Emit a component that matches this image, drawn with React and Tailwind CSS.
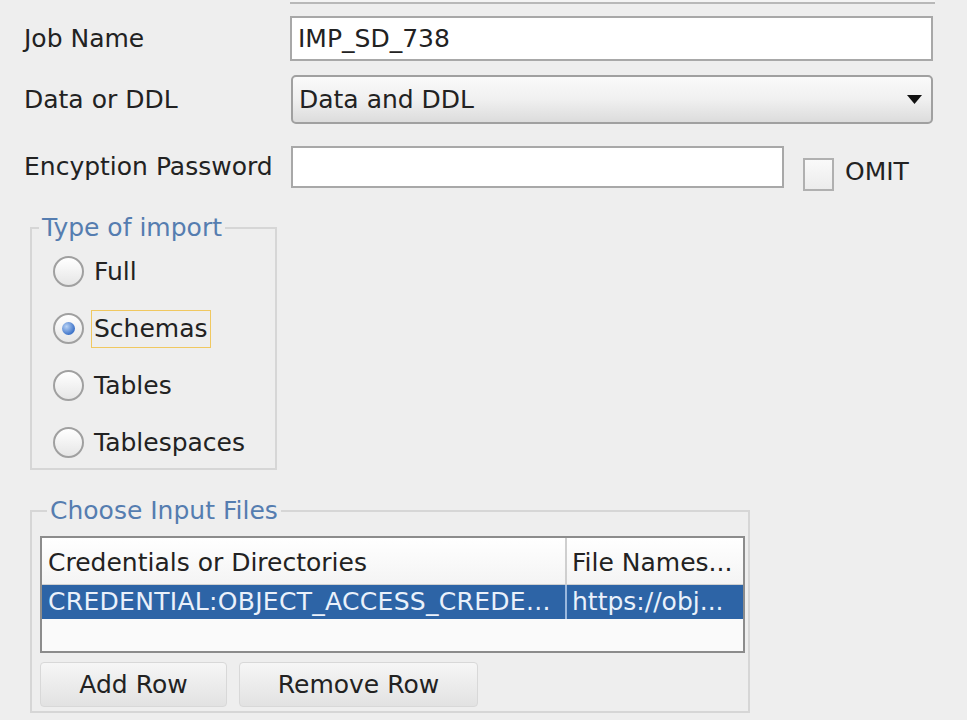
import React from "react";

const font = { fontFamily: '"DejaVu Sans", Verdana, sans-serif' };

function Radio({ label, checked, focused }) {
  return (
    <div className="flex items-center h-[57px]">
      <div className="ml-[21px] w-[31px] h-[31px] rounded-full border-2 border-[#a0a0a0] bg-gradient-to-b from-[#ffffff] to-[#e6e6e6] flex items-center justify-center">
        {checked && (
          <div className="w-[13px] h-[13px] rounded-full bg-[radial-gradient(circle_at_35%_35%,#b9d3f5,#3d73c9_70%)]" />
        )}
      </div>
      <span
        className={
          "ml-[7px] px-[2px] leading-[36px] " +
          (focused ? "border border-[#f0c860]" : "border border-transparent")
        }
      >
        {label}
      </span>
    </div>
  );
}

export default function App() {
  return (
    <div className="w-[967px] h-[720px] bg-[#eeeeee] text-[#222222] text-[25px] overflow-hidden" style={font}>
      {/* cut-off field from above */}
      <div className="ml-[290px] w-[645px] h-[4px] bg-[#f4f4f4] border-b-2 border-[#b8b8b8]" />

      {/* Job Name */}
      <div className="flex items-center mt-[12px] h-[45px]">
        <div className="w-[290px] pl-[24px]">Job Name</div>
        <div className="w-[643px] h-full bg-white border-2 border-[#a8a8a8] flex items-center pl-[6px]">
          IMP_SD_738
        </div>
      </div>

      {/* Data or DDL */}
      <div className="flex items-center mt-[14px] h-[49px]">
        <div className="w-[291px] pl-[24px]">Data or DDL</div>
        <div className="w-[642px] h-full rounded-[5px] border-2 border-[#a0a0a0] bg-gradient-to-b from-[#fafafa] via-[#f0f0f0] to-[#dcdcdc] flex items-center justify-between pl-[6px] pr-[8px]">
          <span>Data and DDL</span>
          <svg width="17" height="11" viewBox="0 0 17 11">
            <path d="M1 1 H16 L8.5 10 Z" fill="#111" />
          </svg>
        </div>
      </div>

      {/* Encryption Password */}
      <div className="flex items-center mt-[22px] h-[42px]">
        <div className="w-[291px] pl-[24px] whitespace-nowrap">Encyption Password</div>
        <div className="w-[493px] h-full bg-white border-2 border-[#a8a8a8]" />
        <div className="ml-[19px] mt-[14px] w-[31px] h-[33px] border-2 border-[#b0b0b0] bg-gradient-to-b from-[#fafafa] to-[#ececec]" />
        <span className="ml-[11px] mt-[10px]">OMIT</span>
      </div>

      {/* Type of import */}
      <fieldset className="ml-[30px] mt-[26px] w-[247px] h-[256px] border-2 border-[#d6d6d6] pb-[6px]">
        <legend className="ml-[7px] px-[3px] text-[#557db0] leading-[28px]">Type of import</legend>
        <div className="mt-[1px]">
          <Radio label="Full" />
          <Radio label="Schemas" checked focused />
          <Radio label="Tables" />
          <Radio label="Tablespaces" />
        </div>
      </fieldset>

      {/* Choose Input Files */}
      <fieldset className="ml-[30px] mt-[27px] w-[720px] h-[216px] border-2 border-[#d6d6d6] pl-[8px] pr-[3px]">
        <legend className="ml-[7px] px-[3px] text-[#557db0] leading-[28px]">Choose Input Files</legend>
        <div className="mt-[11px] w-[705px] h-[117px] border-2 border-[#8c8c8c] bg-[#fafafa] flex flex-col">
          <div className="flex h-[47px] bg-gradient-to-b from-[#ffffff] to-[#f4f4f4] border-b border-[#d0d0d0]">
            <div className="w-[525px] border-r-2 border-[#cfcfcf] pl-[6px] flex items-end pb-[3px] whitespace-nowrap">
              Credentials or Directories
            </div>
            <div className="flex-1 pl-[5px] flex items-end pb-[3px] whitespace-nowrap overflow-hidden">File Names...</div>
          </div>
          <div className="flex h-[34px] bg-[#2d64a6] text-[#eaf1fb]">
            <div className="w-[525px] border-r-2 border-[#9ab8de] pl-[6px] flex items-center whitespace-nowrap overflow-hidden tracking-[0.3px]">
              CREDENTIAL:OBJECT_ACCESS_CREDE...
            </div>
            <div className="flex-1 pl-[5px] flex items-center whitespace-nowrap overflow-hidden">https://obj...</div>
          </div>
        </div>
        <div className="flex gap-[12px] mt-[9px]">
          <div className="w-[187px] h-[45px] rounded-[4px] border border-[#d8d8d8] bg-gradient-to-b from-[#f6f6f6] to-[#e2e2e2] flex items-center justify-center">
            Add Row
          </div>
          <div className="w-[239px] h-[45px] rounded-[4px] border border-[#d8d8d8] bg-gradient-to-b from-[#f6f6f6] to-[#e2e2e2] flex items-center justify-center">
            Remove Row
          </div>
        </div>
      </fieldset>
    </div>
  );
}
